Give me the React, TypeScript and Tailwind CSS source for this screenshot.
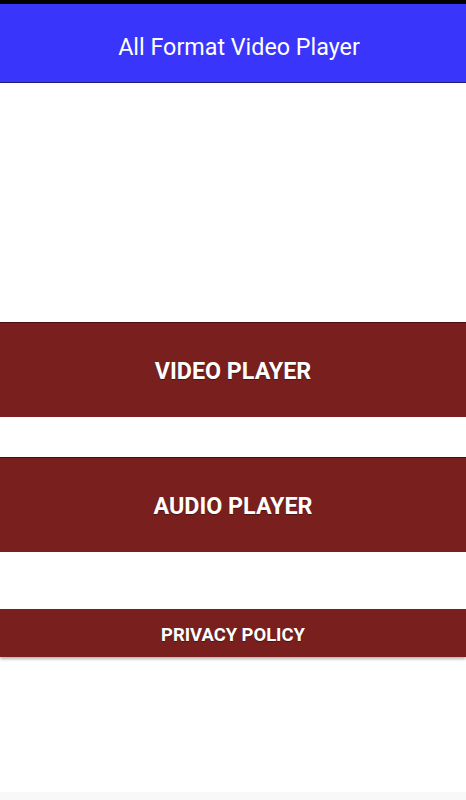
export default function App() {
  const font = { fontFamily: "Roboto, 'Liberation Sans', sans-serif" };
  return (
    <div className="w-[466px] h-[800px] bg-white flex flex-col" style={font}>
      <div className="h-[4px] bg-black" />
      <header className="h-[79px] bg-[#3a35fb] border-b border-[#1d1a7a] flex items-center justify-center pt-[8px] pl-[12px]">
        <h1 className="text-[23.3px] text-white font-normal">All Format Video Player</h1>
      </header>

      <div className="flex flex-col mt-[239px]">
        <button className="h-[95px] pt-[2px] bg-[#79201f] border-t border-[#4a0f0f] text-white text-[23.3px] font-bold [text-shadow:0_1px_1px_rgba(0,0,0,0.4)]">
          VIDEO PLAYER
        </button>
        <button className="h-[95px] mt-[40px] pt-[2px] bg-[#79201f] border-t border-[#4a0f0f] text-white text-[23.3px] font-bold [text-shadow:0_1px_1px_rgba(0,0,0,0.4)]">
          AUDIO PLAYER
        </button>
        <button className="h-[48px] mt-[57px] pt-[3px] bg-[#79201f] shadow-[0_2px_3px_rgba(0,0,0,0.3)] text-white text-[18.4px] font-bold [text-shadow:0_1px_1px_rgba(0,0,0,0.4)]">
          PRIVACY POLICY
        </button>
      </div>

      <div className="flex-1" />
      <div className="h-[8px] bg-[#f8f8f8]" />
    </div>
  );
}
